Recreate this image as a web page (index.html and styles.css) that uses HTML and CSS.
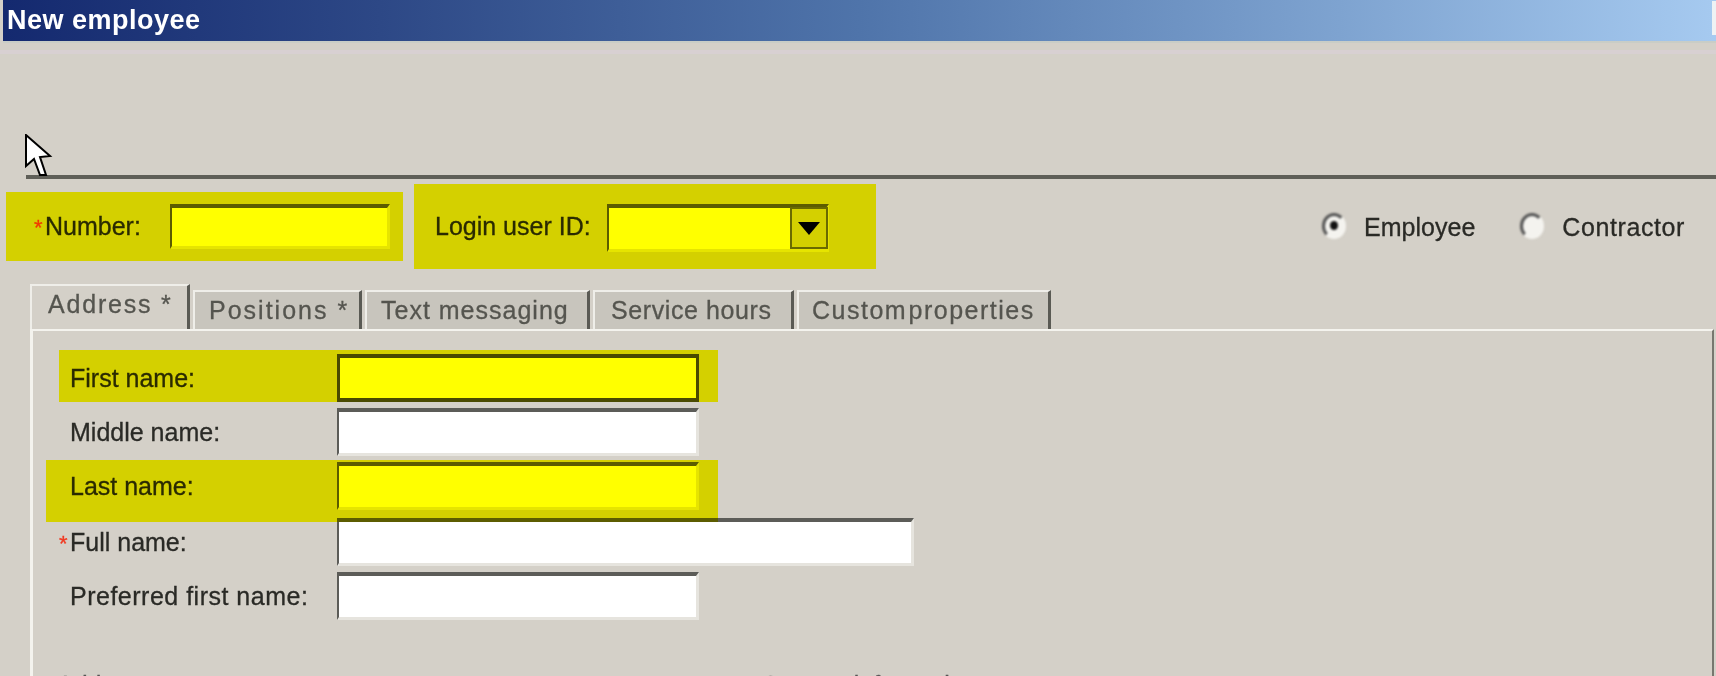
FILE: index.html
```html
<!DOCTYPE html>
<html lang="en">
<head>
    <meta charset="UTF-8">
    <meta name="viewport" content="width=device-width, initial-scale=1.0">
    <title>New employee</title>
    <link rel="stylesheet" href="styles.css">
</head>
<body>
    <div class="titlebar">
        <span class="title-text">New employee</span>
        <span class="title-btn"></span>
    </div>
    <div class="title-rule"></div>

    <div class="toolbar">
        <svg class="cursor" width="28" height="44" viewBox="0 0 28 44">
            <path d="M1 1 L1 32 L9 25 L15 41 L21 41 L15 23 L25 22 Z" fill="#fff" stroke="#000" stroke-width="2" stroke-linejoin="miter"/>
        </svg>
    </div>

    <div class="id-row">
        <div class="id-field id-number hl">
            <label class="id-label txt"><span class="req">*</span>Number:</label>
            <input class="box number-box" type="text">
        </div>
        <div class="id-field id-login hl">
            <label class="id-label login-label txt">Login user ID:</label>
            <div class="combo">
                <input class="box combo-box" type="text">
                <span class="combo-btn"><span class="combo-arrow"></span></span>
            </div>
        </div>
        <div class="radios">
            <div class="radio-item">
                <span class="radio radio-on"></span>
                <span class="txt">Employee</span>
            </div>
            <div class="radio-item">
                <span class="radio"></span>
                <span class="txt contractor-text">Contractor</span>
            </div>
        </div>
    </div>

    <div class="tabs">
        <div class="tab tab-active tab-address"><span class="txt">Address *</span></div>
        <div class="tab tab-positions"><span class="txt">Positions *</span></div>
        <div class="tab tab-text"><span class="txt">Text messaging</span></div>
        <div class="tab tab-hours"><span class="txt">Service hours</span></div>
        <div class="tab tab-custom"><span class="txt custom-text">Custom properties</span></div>
    </div>

    <div class="panel">
        <div class="row hl-first">
            <label class="row-label txt">First name:</label>
            <input class="box name-box dark-box" type="text">
        </div>
        <div class="row">
            <label class="row-label txt">Middle name:</label>
            <input class="box name-box" type="text">
        </div>
        <div class="row hl-last">
            <label class="row-label txt">Last name:</label>
            <input class="box name-box" type="text">
        </div>
        <div class="row row-full">
            <label class="row-label txt"><span class="req">*</span>Full name:</label>
            <input class="box full-box" type="text">
        </div>
        <div class="row">
            <label class="row-label preferred-label txt">Preferred first name:</label>
            <input class="box name-box" type="text">
        </div>
        <div class="groups">
            <span class="group-address txt">Address</span>
            <span class="group-contact txt">Contact information</span>
        </div>
    </div>
</body>
</html>
```

FILE: styles.css
```css
html, body {
    height: 100%;
}

body {
    margin: 0;
    height: 676px;
    overflow: hidden;
    background-color: #d4d0c8;
    font-family: "Liberation Sans", Arial, sans-serif;
    font-size: 25px;
    color: #2a2a26;
}

.txt {
    filter: blur(0.7px);
    white-space: nowrap;
    -webkit-text-stroke: 0.3px currentColor;
}

.req {
    color: #f03a22;
    display: inline-block;
    width: 11px;
    margin-left: -11px;
    font-size: 22px;
}

/* overlay that tints whatever is under it, like a highlighter */
.hl,
.hl-first,
.hl-last {
    position: relative;
}

.hl::after,
.hl-first::after,
.hl-last::after {
    content: "";
    position: absolute;
    z-index: 1;
    background-color: #ffff00;
    mix-blend-mode: multiply;
}

.hl::after {
    top: 0;
    right: 0;
    bottom: 0;
    left: 0;
}

.hl-first::after {
    top: -1px;
    bottom: 3px;
    left: -11px;
    width: 659px;
}

.hl-last::after {
    top: 1px;
    bottom: -9px;
    left: -24px;
    width: 672px;
}

.titlebar {
    display: flex;
    align-items: center;
    justify-content: space-between;
    height: 41px;
    margin-left: 3px;
    background: linear-gradient(to right, #14296f 0%, #2d4886 22%, #4f74aa 50%, #7ea3d0 78%, #a6caf0 100%);
    border-bottom: 2px solid #c9cdc6;
}

.title-text {
    padding-left: 4px;
    color: #fff;
    font-size: 27px;
    font-weight: bold;
    letter-spacing: 0.5px;
    filter: blur(0.6px);
}

.title-btn {
    width: 4px;
    height: 34px;
    margin-top: -6px;
    background-color: #eef2f4;
}

.title-rule {
    height: 4px;
    margin-top: 7px;
    background-color: #d8d0d2;
}

.toolbar {
    position: relative;
    height: 121px;
    margin-left: 26px;
    border-bottom: 4px solid #5f5f58;
}

.cursor {
    position: absolute;
    left: -1px;
    top: 80px;
}

.id-row {
    display: flex;
    align-items: center;
    height: 85px;
    margin-top: 5px;
}

.id-field {
    display: flex;
    align-items: center;
    box-sizing: border-box;
}

.id-number {
    width: 397px;
    height: 69px;
    margin-left: 6px;
    padding-left: 39px;
}

.id-login {
    width: 462px;
    height: 85px;
    margin-left: 11px;
    padding-left: 21px;
}

.id-label {
    width: 125px;
}

.login-label {
    width: 172px;
}

.box {
    display: block;
    box-sizing: border-box;
    margin: 0;
    padding: 0;
    background-color: #fff;
    border-style: solid;
    border-width: 4px 3px 3px 2px;
    border-color: #5c5c58 #e6e4de #e6e4de #5c5c58;
    border-radius: 0;
    outline: none;
    filter: blur(0.7px);
}

.dark-box {
    border-width: 4px 3px 4px 3px;
    border-color: #4a4a44;
}

.number-box {
    width: 220px;
    height: 45px;
}

.combo {
    position: relative;
    width: 222px;
    height: 48px;
    margin-top: 3px;
}

.combo-box {
    width: 100%;
    height: 100%;
}

.combo-btn {
    position: absolute;
    top: 3px;
    right: 1px;
    bottom: 3px;
    display: flex;
    align-items: center;
    justify-content: center;
    box-sizing: border-box;
    width: 38px;
    background-color: #d4d0c8;
    border: 2px solid #6a6a60;
    filter: blur(0.6px);
}

.combo-arrow {
    width: 0;
    height: 0;
    border-left: 11px solid transparent;
    border-right: 11px solid transparent;
    border-top: 13px solid #000;
}

.radios {
    display: flex;
    align-items: center;
    gap: 45px;
    margin-left: auto;
    padding-right: 31px;
    margin-top: 2px;
}

.radio-item {
    display: flex;
    align-items: center;
    gap: 18px;
}

.contractor-text {
    letter-spacing: 0.6px;
}

.radio {
    position: relative;
    display: block;
    box-sizing: border-box;
    width: 24px;
    height: 26px;
    margin-top: -3px;
    border-radius: 50%;
    border: 3px solid;
    border-color: #555 transparent transparent #555;
    background-color: #f4f3ef;
    filter: blur(0.9px);
}

.radio-on::after {
    content: "";
    position: absolute;
    top: 5px;
    left: 5px;
    width: 8px;
    height: 9px;
    border-radius: 50%;
    background-color: #111;
}

.tabs {
    display: flex;
    align-items: flex-end;
    gap: 3px;
    height: 45px;
    margin-top: 15px;
    margin-left: 30px;
}

.tab {
    display: flex;
    align-items: center;
    box-sizing: border-box;
    height: 39px;
    background-color: #c8c5bd;
    border-top: 2px solid #efeee9;
    border-left: 2px solid #efeee9;
    border-right: 3px solid #5a5a54;
    color: #55554f;
    letter-spacing: 1px;
}

.tab-active {
    height: 45px;
    padding-bottom: 7px;
    background-color: #d4d0c8;
}

.tab-address {
    width: 160px;
    padding-left: 16px;
    letter-spacing: 1.8px;
}

.tab-positions {
    width: 169px;
    padding-left: 14px;
    letter-spacing: 2px;
}

.tab-text {
    width: 225px;
    padding-left: 14px;
}

.tab-hours {
    width: 201px;
    padding-left: 16px;
    letter-spacing: 0.6px;
}

.tab-custom {
    width: 254px;
    padding-left: 13px;
}

.custom-text {
    letter-spacing: 1.5px;
    word-spacing: -7px;
}

.panel {
    box-sizing: border-box;
    height: 347px;
    margin-left: 30px;
    margin-right: 2px;
    padding: 20px 0 0 37px;
    border-top: 2px solid #f4f3ee;
    border-left: 3px solid #f4f3ee;
    border-right: 2px solid #77776f;
}

.row {
    display: flex;
    align-items: center;
    height: 54px;
}

.row-full {
    margin-top: 2px;
}

.row-label {
    flex-shrink: 0;
    width: 267px;
}

.preferred-label {
    letter-spacing: 0.5px;
}

.name-box {
    flex-shrink: 0;
    width: 362px;
    height: 48px;
}

.full-box {
    flex-shrink: 0;
    width: 577px;
    height: 48px;
}

.groups {
    display: flex;
    margin-top: 48px;
    margin-left: -13px;
    color: #555;
}

.group-contact {
    margin-left: 612px;
}
```
